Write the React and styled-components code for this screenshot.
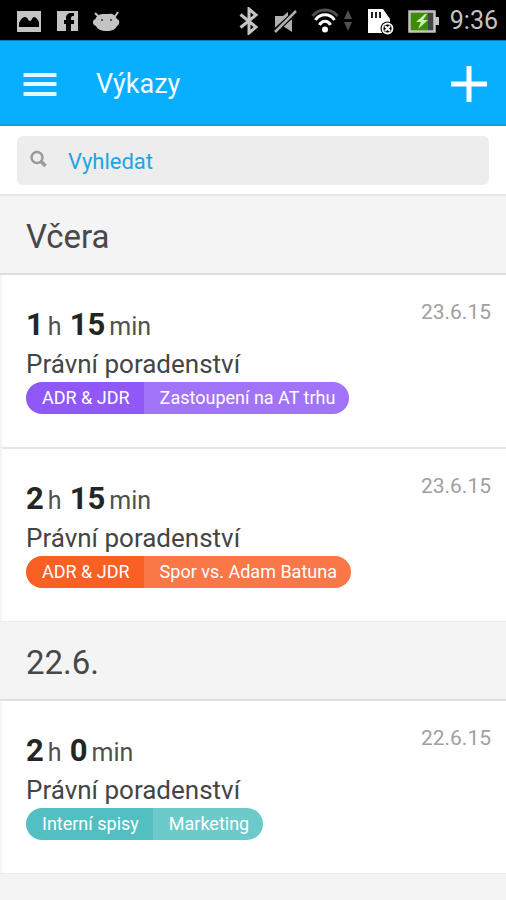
import React from "react";
import styled, { createGlobalStyle } from "styled-components";

const Global = createGlobalStyle`
  *, *::before, *::after { box-sizing: border-box; }
  body {
    margin: 0;
    background: #f4f4f4;
    color: #444;
    font-family: Roboto, "Liberation Sans", sans-serif;
  }
  h1, h2, p, ul { margin: 0; padding: 0; }
`;

const StatusBar = styled.div`
  display: flex;
  align-items: center;
  justify-content: space-between;
  height: 40px;
  padding: 2px 8px 0 17px;
  background: #000;
`;

const StatusGroup = styled.div`
  display: flex;
  align-items: center;
  gap: ${(p) => p.$gap}px;

  svg { display: block; }
`;

const Clock = styled.time`
  color: #c4c4c4;
  font-size: 25px;
  line-height: 38px;
`;

const AppBar = styled.header`
  display: flex;
  align-items: center;
  height: 86px;
  padding: 2px 16px 0 20px;
  background: #08aeff;
  border-top: 1px solid #0879b4;
  border-bottom: 2px solid #0a9fe6;
`;

const IconButton = styled.button`
  display: flex;
  padding: 0;
  border: 0;
  background: none;
  cursor: pointer;
`;

const Title = styled.h1`
  flex: 1;
  padding-left: 36px;
  color: #f2fbff;
  font-size: 27px;
  font-weight: 400;
  line-height: 40px;
`;

const SearchBar = styled.form`
  padding: 10px 17px 9px;
  background: #fff;
  border-bottom: 2px solid #e6e6e6;
`;

const SearchField = styled.label`
  display: flex;
  align-items: center;
  gap: 20px;
  height: 49px;
  padding: 0 12px;
  border-radius: 6px;
  background: #ededed;
`;

const SearchInput = styled.input`
  flex: 1;
  min-width: 0;
  padding: 2px 0 0;
  border: 0;
  outline: 0;
  background: none;
  color: #1da5e2;
  font: 400 22px/32px Roboto, "Liberation Sans", sans-serif;

  &::placeholder { color: #1da5e2; opacity: 1; }
`;

const DayHeading = styled.h2`
  padding: 21px 26px 17px;
  background: #f4f4f4;
  border-bottom: 2px solid #dfdfdf;
  color: #484848;
  font-size: 33px;
  font-weight: 400;
  line-height: 39px;
`;

const EntryList = styled.ul`
  list-style: none;
  border-bottom: 1px solid #ebebeb;
`;

const Entry = styled.li`
  display: flex;
  justify-content: space-between;
  padding: 24px 15px 33px 24px;
  background: #fff;
  border-left: 2px solid #f5f5f5;

  & + & { border-top: 2px solid #e8e8e8; }
`;

const EntryBody = styled.div`
  display: flex;
  flex-direction: column;
  align-items: flex-start;
`;

const Duration = styled.p`
  padding-top: 6px;
  color: #505050;
  font-size: 25px;
  line-height: 40px;
`;

const Amount = styled.strong`
  margin-right: 4px;
  color: #252525;
  font-size: 31px;
  font-weight: 700;

  & + & { margin-left: 2px; }
`;

const Activity = styled.p`
  padding-bottom: 1px;
  color: #454545;
  font-size: 26px;
  line-height: 34px;
`;

const Tag = styled.div`
  display: flex;
  overflow: hidden;
  border-radius: 16px;
  background: ${(p) => p.$color};
  color: #fff;
  font-size: 18px;
  line-height: 32px;
`;

const TagPart = styled.span`
  padding: 0 14px 0 16px;
  white-space: nowrap;
  background: ${(p) => (p.$light ? "rgba(255, 255, 255, 0.16)" : "none")};
`;

const EntryDate = styled.time`
  color: #a0a0a0;
  font-size: 21px;
  line-height: 26px;
`;

const days = [
  {
    label: "Včera",
    entries: [
      { h: 1, m: 15, date: "23.6.15", client: "ADR & JDR", project: "Zastoupení na AT trhu", color: "#9059f7" },
      { h: 2, m: 15, date: "23.6.15", client: "ADR & JDR", project: "Spor vs. Adam Batuna", color: "#fa5f24" },
    ],
  },
  {
    label: "22.6.",
    entries: [
      { h: 2, m: 0, date: "22.6.15", client: "Interní spisy", project: "Marketing", color: "#52c0c2" },
    ],
  },
];

function Notifications() {
  return (
    <StatusGroup $gap={15}>
      <svg width="25" height="22" viewBox="0 0 25 22" aria-hidden="true">
        <path fill="#c4c4c4" fillRule="evenodd" d="M0 1h24v21H0zM2 3v14h20V3z" />
        <path fill="#c4c4c4" d="M2 3h20v9c-1-2-3-5-5-5s-2 4-4 4-2-4-5-4-5 4-6 6z" />
      </svg>
      <svg width="21" height="20" viewBox="0 0 21 20" aria-hidden="true">
        <path fill="#c4c4c4" d="M0 0h21v20h-7v-7h3V9h-3V7c0-1 .5-2 2-2h1V2h-3c-3 0-5 2-5 5v2H7v4h2v7H0z" />
      </svg>
      <svg width="27" height="21" viewBox="0 0 27 21" aria-hidden="true">
        <path fill="none" stroke="#c4c4c4" strokeWidth="2" d="M2 2l5 5M25 1l-4 6" />
        <path fill="#c4c4c4" d="M6 4c2-1.500 5-1 7.500-1S19 2 21 4c2 1 2 3 3 4 3 1 3 5 0 7-1 3-5 5-10 5-6 0-10-2-11-5-4-1-4-6-.5-7C3 6 4 5 6 4z" />
        <circle cx="9" cy="9" r="1" fill="#333" />
        <circle cx="18" cy="9" r="1" fill="#333" />
      </svg>
    </StatusGroup>
  );
}

function SystemIcons() {
  return (
    <StatusGroup $gap={14}>
      <svg width="20" height="28" viewBox="0 0 20 28" aria-hidden="true">
        <path fill="none" stroke="#c4c4c4" strokeWidth="3" d="M1.500 7.500L17 20l-7 6V2l7 6L1.500 20.500" />
      </svg>
      <StatusGroup $gap={13}>
        <svg width="25" height="24" viewBox="0 0 25 24" aria-hidden="true">
          <path fill="#b0b0b0" d="M2 7h8l5-4v4L2 20zM19 10v13l-9-6z" />
          <path stroke="#000" strokeWidth="5" d="M1 23L24 2" />
          <path stroke="#b0b0b0" strokeWidth="2.500" d="M2 23L23 2" />
        </svg>
        <svg width="42" height="26" viewBox="0 0 42 26" aria-hidden="true">
          <path fill="none" stroke="#505050" strokeWidth="3" d="M1.500 8C8 0 20 0 26.500 8" />
          <path fill="none" stroke="#fff" strokeWidth="3" d="M4.500 12C9 5 19 5 23.500 12M8.500 17C11 12 17 12 19.500 17" />
          <circle cx="14" cy="21.500" r="3" fill="#fff" />
          <path fill="#505050" d="M33 11l4-9 4 9zM33 14h8l-4 9z" />
        </svg>
      </StatusGroup>
      <svg width="27" height="27" viewBox="0 0 27 27" aria-hidden="true">
        <path fill="#fff" d="M1 1h15l7 10v14H1z" />
        <path stroke="#222" strokeWidth="2" d="M5 4v6M9 4v6M13 4v6" />
        <circle cx="20.500" cy="20.500" r="7" fill="#000" />
        <circle cx="20.500" cy="20.500" r="5" fill="none" stroke="#fff" strokeWidth="1.800" />
        <path stroke="#fff" strokeWidth="2" d="M18 18l5 5M23 18l-5 5" />
      </svg>
      <StatusGroup $gap={11}>
        <svg width="31" height="23" viewBox="0 0 31 23" aria-hidden="true">
          <path fill="#3c8d05" d="M1 1h19v21H1z" />
          <path fill="#454545" d="M20 2h6v19h-6z" />
          <path fill="none" stroke="#c4c4c4" strokeWidth="2.500" d="M1.500 1.500h25v20h-25z" />
          <path fill="#c4c4c4" d="M27 7h4v8h-4z" />
          <path fill="#c7efb0" d="M17 4L8 12h5l-3 7 10-9h-5l4-6z" />
        </svg>
        <Clock>9:36</Clock>
      </StatusGroup>
    </StatusGroup>
  );
}

export default function App() {
  return (
    <>
      <Global />
      <StatusBar>
        <Notifications />
        <SystemIcons />
      </StatusBar>
      <AppBar>
        <IconButton type="button" aria-label="Menu">
          <svg width="40" height="40" viewBox="0 0 40 40">
            <path stroke="#e4f8ff" strokeWidth="4" d="M3.500 11h33M3.500 20h33M3.500 30h33" />
          </svg>
        </IconButton>
        <Title>Výkazy</Title>
        <IconButton type="button" aria-label="Přidat">
          <svg width="42" height="42" viewBox="0 0 42 42">
            <path stroke="#fff" strokeWidth="5" d="M3 21h36M21 3v36" />
          </svg>
        </IconButton>
      </AppBar>
      <main>
        <SearchBar role="search">
          <SearchField>
            <svg width="19" height="21" viewBox="0 0 19 21" aria-hidden="true">
              <circle cx="8" cy="7.500" r="5.500" fill="none" stroke="#9b9b9b" strokeWidth="2.500" />
              <path stroke="#9b9b9b" strokeWidth="3.500" d="M11.500 11l5 5" />
            </svg>
            <SearchInput type="search" aria-label="Vyhledat" placeholder="Vyhledat" />
          </SearchField>
        </SearchBar>
        {days.map((day) => (
          <section key={day.label}>
            <DayHeading>{day.label}</DayHeading>
            <EntryList>
              {day.entries.map((e) => (
                <Entry key={e.project}>
                  <EntryBody>
                    <Duration>
                      <Amount>{e.h}</Amount>h <Amount>{e.m}</Amount>min
                    </Duration>
                    <Activity>Právní poradenství</Activity>
                    <Tag $color={e.color}>
                      <TagPart>{e.client}</TagPart>
                      <TagPart $light>{e.project}</TagPart>
                    </Tag>
                  </EntryBody>
                  <EntryDate>{e.date}</EntryDate>
                </Entry>
              ))}
            </EntryList>
          </section>
        ))}
      </main>
    </>
  );
}
